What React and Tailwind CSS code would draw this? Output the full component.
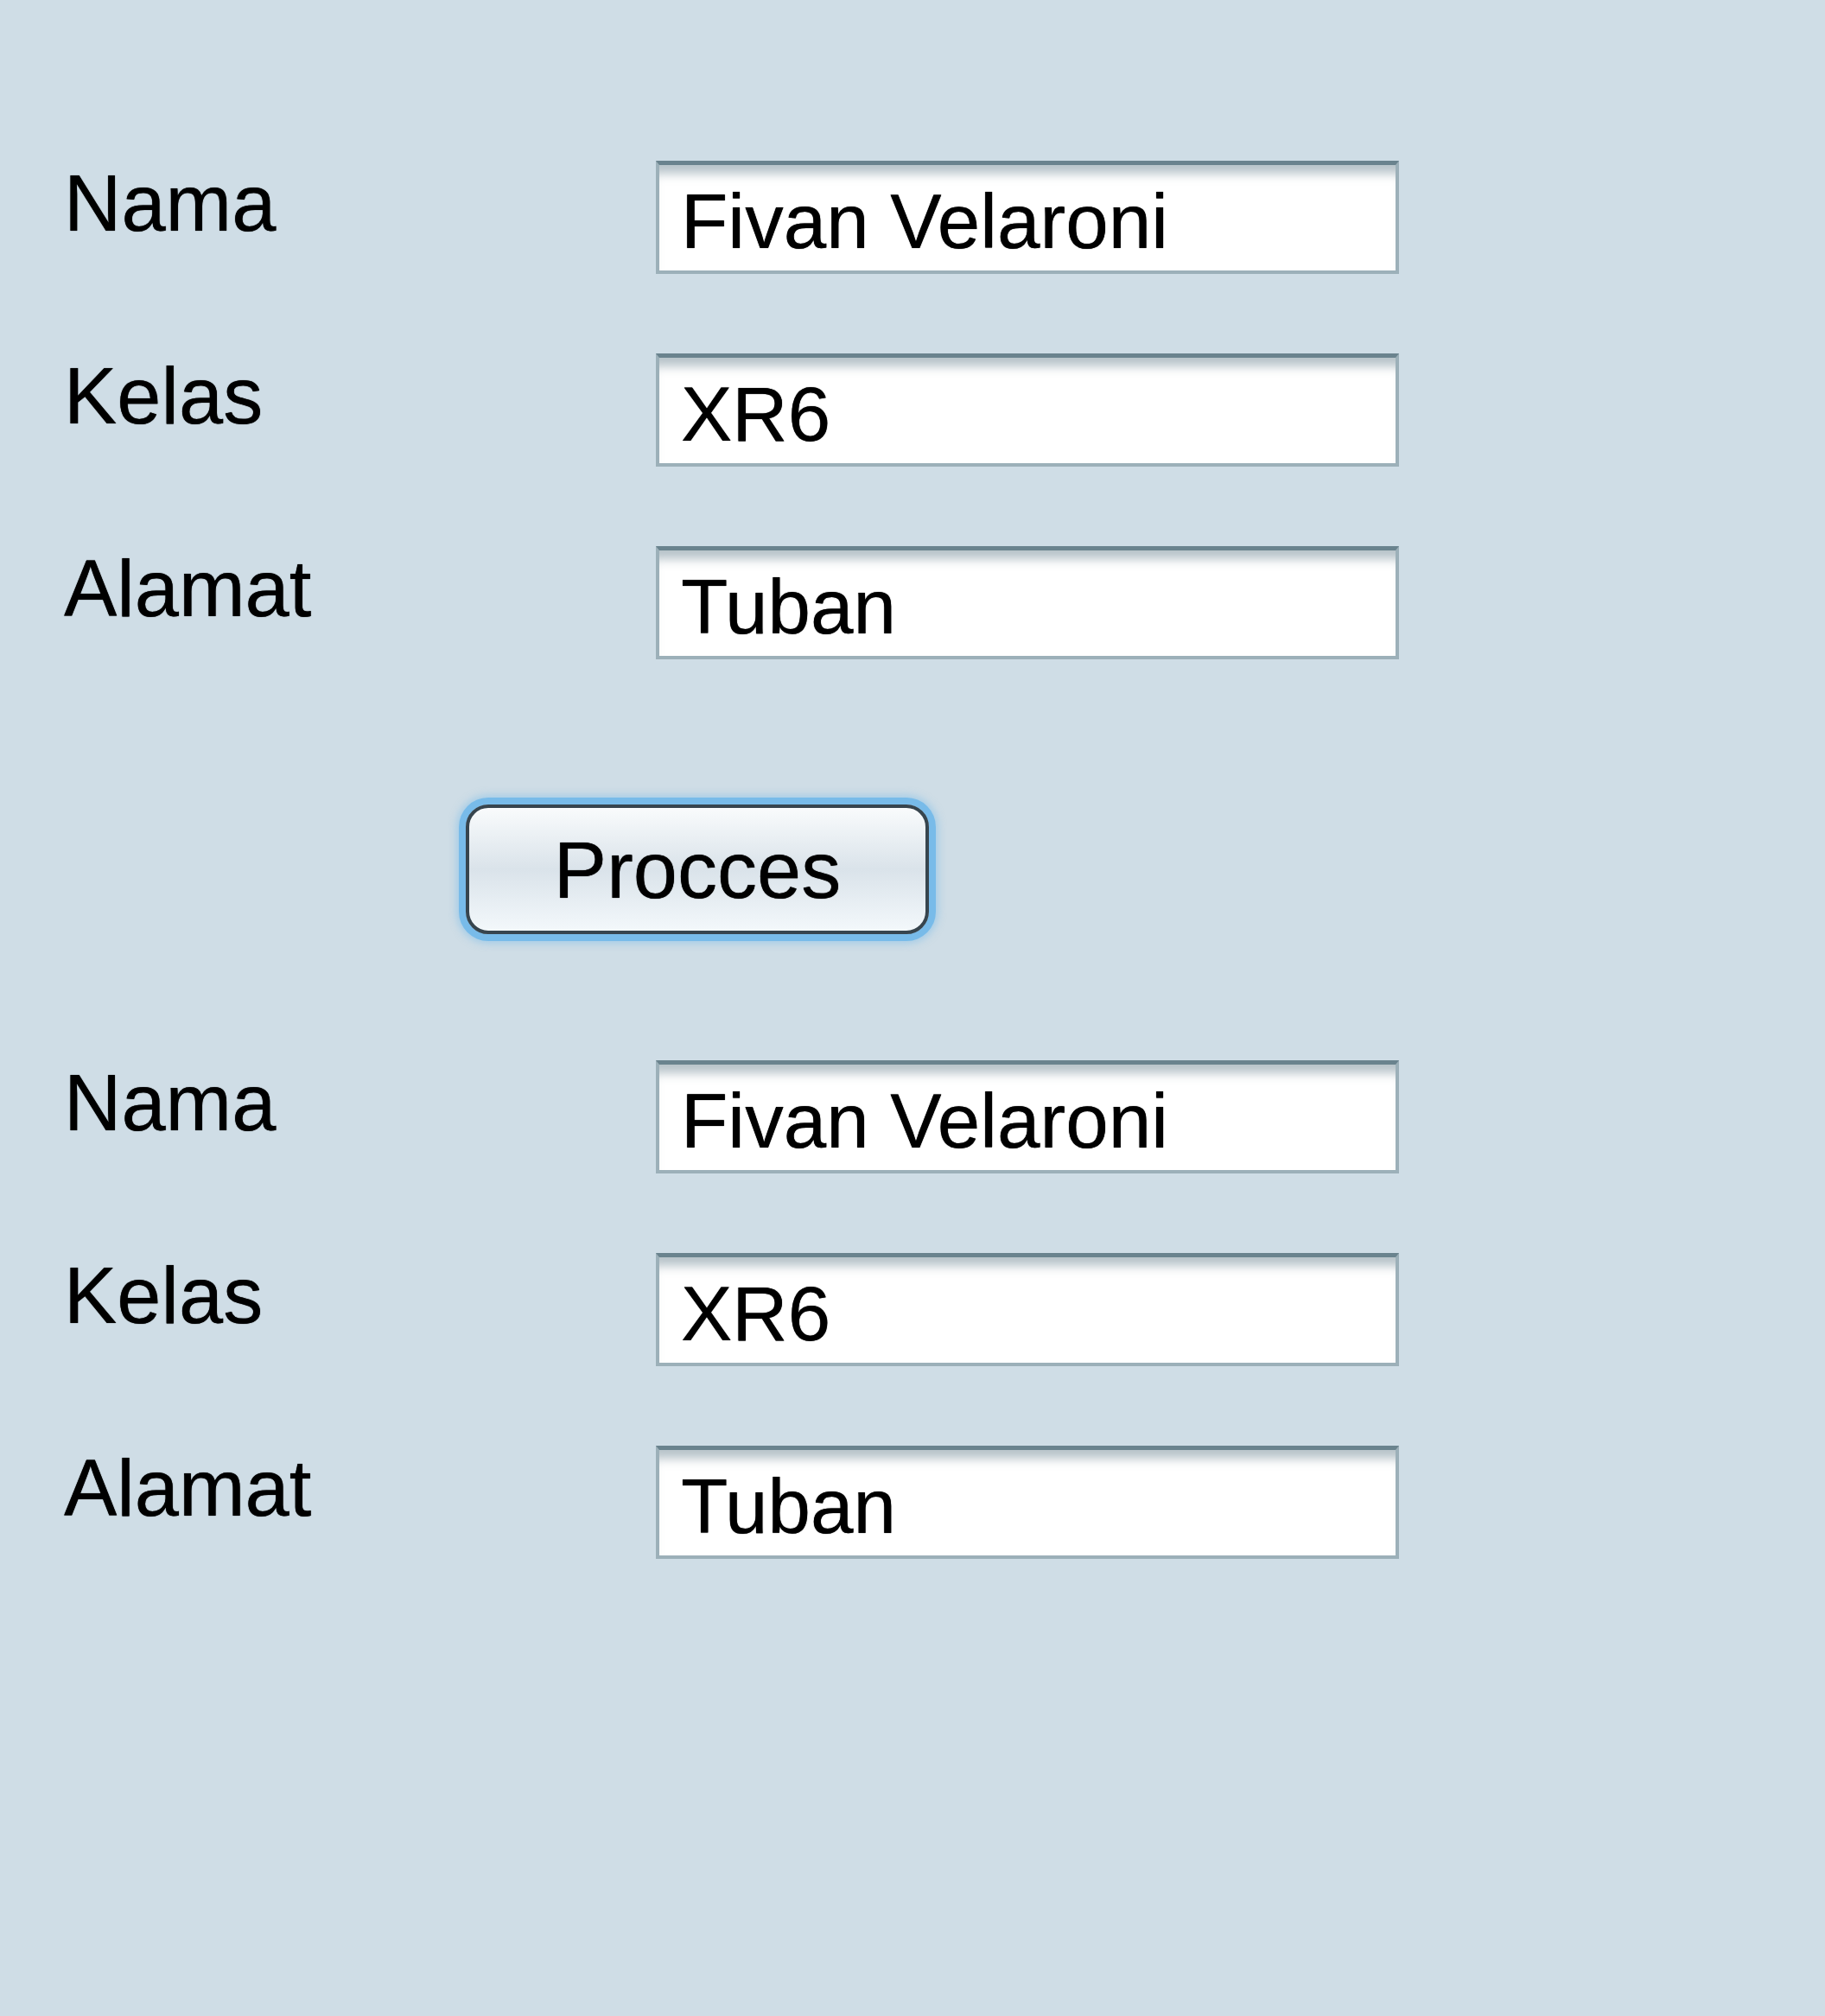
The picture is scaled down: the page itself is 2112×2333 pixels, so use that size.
const rows = [
  { label: "Nama", value: "Fivan Velaroni" },
  { label: "Kelas", value: "XR6" },
  { label: "Alamat", value: "Tuban" },
];

function Field({ label, value }) {
  return (
    <div className="flex items-start">
      <div className="w-[759px] pl-[74px] pt-[3px] text-[92px] leading-none text-black [text-shadow:0_0_1px_#000]">
        {label}
      </div>
      <div className="h-[131px] w-[860px] border-[4px] border-[#9cb0b9] border-t-[5px] border-t-[#6a838e] bg-white pl-[25px] pt-[21px] text-[89px] leading-none text-black shadow-[inset_0_18px_12px_-8px_rgba(111,136,147,0.5)] [text-shadow:0_0_1px_#000]">
        {value}
      </div>
    </div>
  );
}

export default function App() {
  return (
    <div
      className="min-h-[2333px] w-full bg-[#cfdde6] pt-[186px]"
      style={{ fontFamily: '"Liberation Sans", Arial, sans-serif' }}
    >
      {/* first group */}
      <div className="flex flex-col gap-[92px]">
        {rows.map((r) => (
          <Field key={"a" + r.label} {...r} />
        ))}
      </div>

      {/* button */}
      <div className="pl-[539px] pt-[168px] pb-[146px]">
        <button className="flex h-[150px] w-[536px] items-center justify-center rounded-[26px] border-[4px] border-[#37454e] bg-gradient-to-b from-[#f9fbfc] via-[#dae3ea] to-[#f3f8fb] pt-[2px] text-[92px] leading-none text-black shadow-[0_0_0_8px_#78bbe9,0_0_8px_11px_rgba(123,189,233,0.5)] [text-shadow:0_0_1px_#000]">
          Procces
        </button>
      </div>

      {/* second group */}
      <div className="flex flex-col gap-[92px]">
        {rows.map((r) => (
          <Field key={"b" + r.label} {...r} />
        ))}
      </div>
    </div>
  );
}
